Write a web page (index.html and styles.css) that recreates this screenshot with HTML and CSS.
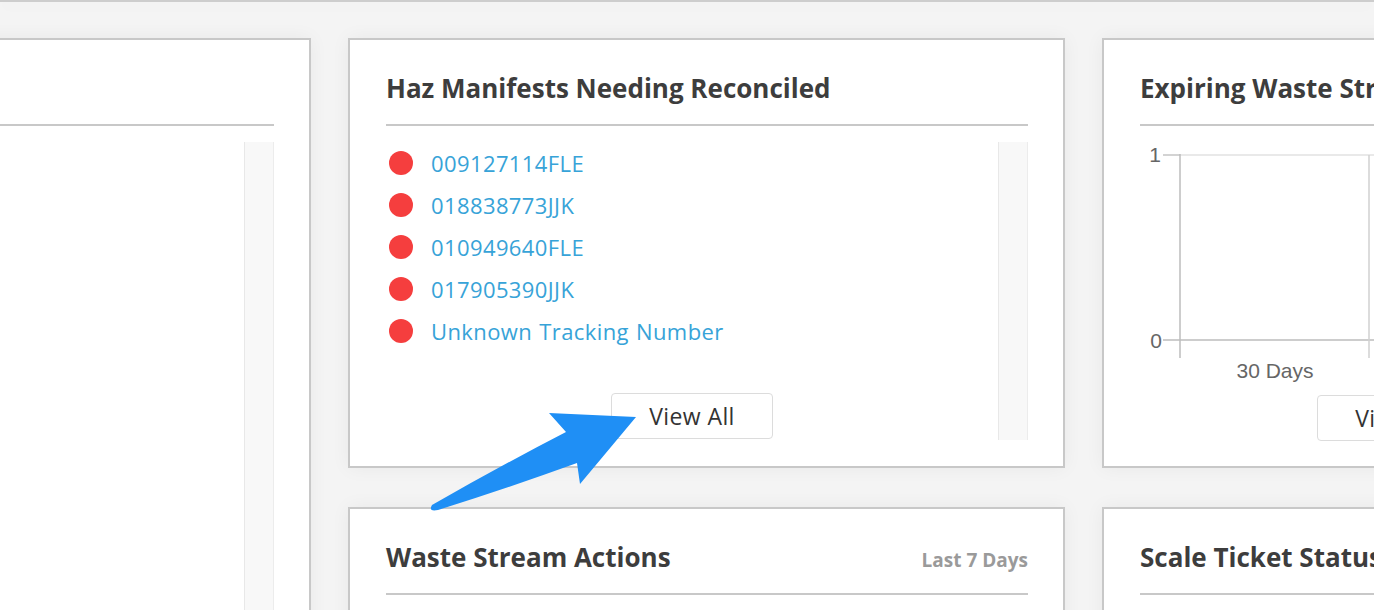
FILE: index.html
```html
<!DOCTYPE html>
<html lang="en">
<head>
<meta charset="UTF-8">
<meta name="viewport" content="width=device-width, initial-scale=1.0">
<title>Dashboard</title>
<link rel="stylesheet" href="styles.css">
</head>
<body>
<div class="topbar"></div>
<div class="page">
    <div class="dashboard">
        <section class="card card-tall">
            <div class="card-head"><h2 class="card-title">&nbsp;</h2></div>
            <div class="card-body">
                <div class="scroll-area">
                    <div class="scroll-content"></div>
                    <div class="scroll-track"></div>
                </div>
            </div>
        </section>

        <section class="card">
            <div class="card-head"><h2 class="card-title">Haz Manifests Needing Reconciled</h2></div>
            <div class="card-body">
                <div class="scroll-area">
                    <div class="scroll-content">
                        <ul class="manifest-list">
                            <li><span class="dot"></span><a href="#">009127114FLE</a></li>
                            <li><span class="dot"></span><a href="#">018838773JJK</a></li>
                            <li><span class="dot"></span><a href="#">010949640FLE</a></li>
                            <li><span class="dot"></span><a href="#">017905390JJK</a></li>
                            <li><span class="dot"></span><a href="#">Unknown Tracking Number</a></li>
                        </ul>
                        <div class="actions"><button class="btn">View All</button></div>
                    </div>
                    <div class="scroll-track"></div>
                </div>
            </div>
        </section>

        <section class="card">
            <div class="card-head"><h2 class="card-title">Expiring Waste Streams</h2></div>
            <div class="card-body">
                <svg class="chart" width="642" height="240" viewBox="0 0 642 240">
                    <line x1="40" y1="13" x2="642" y2="13" stroke="#e2e2e2" stroke-width="1.5"/>
                    <line x1="23" y1="13" x2="40" y2="13" stroke="#c4c4c4" stroke-width="1.5"/>
                    <line x1="23" y1="198" x2="642" y2="198" stroke="#bdbdbd" stroke-width="1.5"/>
                    <line x1="40" y1="12" x2="40" y2="216" stroke="#bdbdbd" stroke-width="1.5"/>
                    <line x1="229" y1="13" x2="229" y2="216" stroke="#d0d0d0" stroke-width="1.5"/>
                    <text x="21" y="20" text-anchor="end" class="chart-label">1</text>
                    <text x="22" y="206" text-anchor="end" class="chart-label">0</text>
                    <text x="135" y="236" text-anchor="middle" class="chart-label">30 Days</text>
                </svg>
                <div class="chart-actions"><button class="btn">View All</button></div>
            </div>
        </section>

        <section class="card">
            <div class="card-head">
                <h2 class="card-title">Waste Stream Actions</h2>
                <span class="card-meta">Last 7 Days</span>
            </div>
        </section>

        <section class="card">
            <div class="card-head"><h2 class="card-title">Scale Ticket Status</h2></div>
        </section>
    </div>

    <svg class="arrow" width="230" height="115" viewBox="0 0 230 115">
        <path d="M12,103 Q80,64 146,30 L129,11 L216,15 L160,82 L157,61 Q88,86 18,108 Q8,110 12,103 Z" fill="#1f8ff5"/>
    </svg>
</div>
</body>
</html>
```

FILE: styles.css
```css
body {
    margin: 0;
    padding: 0;
    background-color: #f4f4f4;
    font-family: "Open Sans", "Noto Sans", sans-serif;
    overflow: hidden;
    height: 610px;
}
.topbar {
    height: 0;
    border-bottom: 2px solid #cdcdcd;
    box-shadow: 0 4px 14px rgba(0, 0, 0, 0.05);
}
.page {
    position: relative;
}
.dashboard {
    display: grid;
    grid-template-columns: 412px 717px 420px;
    grid-template-rows: 430px 200px;
    column-gap: 37px;
    row-gap: 39px;
    margin-left: -101px;
    padding-top: 36px;
}
.card {
    background-color: #fff;
    border: 2px solid #c8c8c8;
    padding: 0 35px 0 36px;
    box-shadow: 0 0 18px rgba(0, 0, 0, 0.05);
    overflow: hidden;
}
.card-tall {
    grid-row: span 2;
}
.card-head {
    display: flex;
    justify-content: space-between;
    align-items: baseline;
    padding: 32px 0 20px;
    border-bottom: 2px solid #c8c8c8;
}
.card-title {
    margin: 0;
    font-size: 26px;
    line-height: 32px;
    font-weight: 700;
    color: #3d3d3d;
    white-space: nowrap;
}
.card-meta {
    font-size: 19px;
    font-weight: 700;
    color: #9a9a9a;
}
.card-body {
    padding-top: 16px;
}
.scroll-area {
    display: flex;
    height: 298px;
}
.card-tall .scroll-area {
    height: 600px;
}
.scroll-content {
    flex: 1;
}
.scroll-track {
    width: 28px;
    background-color: #f8f8f8;
    border-left: 1px solid #e8e8e8;
    border-right: 1px solid #ececec;
}
.manifest-list {
    list-style: none;
    margin: 0;
    padding: 0;
}
.manifest-list li {
    display: flex;
    align-items: center;
    height: 42px;
}
.dot {
    width: 24px;
    height: 24px;
    border-radius: 50%;
    background-color: #f53e3e;
    margin-left: 3px;
    margin-right: 18px;
}
.manifest-list a {
    color: #37a3d8;
    text-decoration: none;
    font-size: 22px;
    letter-spacing: 0.4px;
    word-spacing: 1px;
}
.actions {
    display: flex;
    justify-content: center;
    margin-top: 41px;
}
.btn {
    width: 162px;
    height: 46px;
    background-color: #fff;
    border: 1px solid #dcdcdc;
    border-radius: 4px;
    font-family: "Open Sans", "Noto Sans", sans-serif;
    font-size: 23px;
    letter-spacing: 0.4px;
    color: #333;
    cursor: pointer;
}
.chart {
    display: block;
}
.chart-label {
    font-family: "Liberation Sans", Arial, sans-serif;
    font-size: 21px;
    fill: #666;
}
.chart-actions {
    display: flex;
    margin-top: 13px;
    padding-left: 177px;
}
.arrow {
    position: absolute;
    left: 420px;
    top: 400px;
}
```
